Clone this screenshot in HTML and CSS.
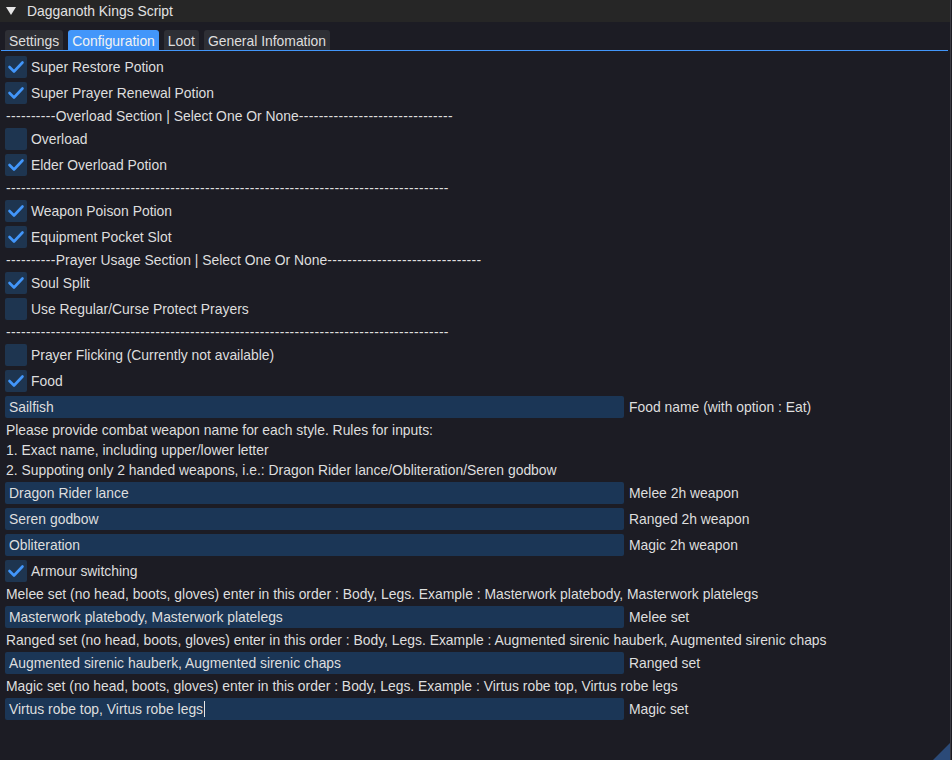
FILE: index.html
```html
<!DOCTYPE html>
<html>
<head>
<meta charset="utf-8">
<link rel="stylesheet" href="styles.css">
</head>
<body>
<div class="window">
  <div class="titlebar">
    <svg class="arrow" width="12" height="10" viewBox="0 0 12 10"><polygon points="1,1 11,1 6,9" fill="#e6e6e6"/></svg>
    <span class="title">Dagganoth Kings Script</span>
  </div>
  <div class="body">
    <div class="tabbar">
      <div class="tab">Settings</div>
      <div class="tab active">Configuration</div>
      <div class="tab">Loot</div>
      <div class="tab">General Infomation</div>
    </div>
    <div class="items">
      <div class="cbrow"><span class="cb on"><svg viewBox="0 0 22 22"><polyline points="4.5,11 9,15.5 17.5,6.5"/></svg></span><span class="lbl">Super Restore Potion</span></div>
      <div class="cbrow"><span class="cb on"><svg viewBox="0 0 22 22"><polyline points="4.5,11 9,15.5 17.5,6.5"/></svg></span><span class="lbl">Super Prayer Renewal Potion</span></div>
      <div class="text"><span class="dash">----------</span>Overload Section | Select One Or None<span class="dash">-------------------------------</span></div>
      <div class="cbrow"><span class="cb"></span><span class="lbl">Overload</span></div>
      <div class="cbrow"><span class="cb on"><svg viewBox="0 0 22 22"><polyline points="4.5,11 9,15.5 17.5,6.5"/></svg></span><span class="lbl">Elder Overload Potion</span></div>
      <div class="text"><span class="dash">-----------------------------------------------------------------------------------------</span></div>
      <div class="cbrow"><span class="cb on"><svg viewBox="0 0 22 22"><polyline points="4.5,11 9,15.5 17.5,6.5"/></svg></span><span class="lbl">Weapon Poison Potion</span></div>
      <div class="cbrow"><span class="cb on"><svg viewBox="0 0 22 22"><polyline points="4.5,11 9,15.5 17.5,6.5"/></svg></span><span class="lbl">Equipment Pocket Slot</span></div>
      <div class="text"><span class="dash">----------</span>Prayer Usage Section | Select One Or None<span class="dash">-------------------------------</span></div>
      <div class="cbrow"><span class="cb on"><svg viewBox="0 0 22 22"><polyline points="4.5,11 9,15.5 17.5,6.5"/></svg></span><span class="lbl">Soul Split</span></div>
      <div class="cbrow"><span class="cb"></span><span class="lbl">Use Regular/Curse Protect Prayers</span></div>
      <div class="text"><span class="dash">-----------------------------------------------------------------------------------------</span></div>
      <div class="cbrow"><span class="cb"></span><span class="lbl">Prayer Flicking (Currently not available)</span></div>
      <div class="cbrow"><span class="cb on"><svg viewBox="0 0 22 22"><polyline points="4.5,11 9,15.5 17.5,6.5"/></svg></span><span class="lbl">Food</span></div>
      <div class="inrow"><span class="input">Sailfish</span><span class="inlbl">Food name (with option : Eat)</span></div>
      <div class="text">Please provide combat weapon name for each style. Rules for inputs:</div>
      <div class="text">1. Exact name, including upper/lower letter</div>
      <div class="text">2. Suppoting only 2 handed weapons, i.e.: Dragon Rider lance/Obliteration/Seren godbow</div>
      <div class="inrow"><span class="input">Dragon Rider lance</span><span class="inlbl">Melee 2h weapon</span></div>
      <div class="inrow"><span class="input">Seren godbow</span><span class="inlbl">Ranged 2h weapon</span></div>
      <div class="inrow"><span class="input">Obliteration</span><span class="inlbl">Magic 2h weapon</span></div>
      <div class="cbrow"><span class="cb on"><svg viewBox="0 0 22 22"><polyline points="4.5,11 9,15.5 17.5,6.5"/></svg></span><span class="lbl">Armour switching</span></div>
      <div class="text">Melee set (no head, boots, gloves) enter in this order : Body, Legs. Example : Masterwork platebody, Masterwork platelegs</div>
      <div class="inrow"><span class="input">Masterwork platebody, Masterwork platelegs</span><span class="inlbl">Melee set</span></div>
      <div class="text">Ranged set (no head, boots, gloves) enter in this order : Body, Legs. Example : Augmented sirenic hauberk, Augmented sirenic chaps</div>
      <div class="inrow"><span class="input">Augmented sirenic hauberk, Augmented sirenic chaps</span><span class="inlbl">Ranged set</span></div>
      <div class="text">Magic set (no head, boots, gloves) enter in this order : Body, Legs. Example : Virtus robe top, Virtus robe legs</div>
      <div class="inrow"><span class="input">Virtus robe top, Virtus robe legs<span class="caret"></span></span><span class="inlbl">Magic set</span></div>
    </div>
  </div>
  <div class="grip"></div>
</div>
</body>
</html>
```
FILE: styles.css
```css
html, body {
  margin: 0;
  padding: 0;
  background: #1c1c24;
}
body {
  font-family: "Liberation Sans", Arial, sans-serif;
  font-size: 13.9px;
  color: #dedede;
}
.window {
  position: relative;
  width: 950px;
  height: 760px;
  background: #1c1c24;
  border-right: 1px solid #3c3c44;
  overflow: hidden;
}
.titlebar {
  height: 22px;
  background: #262626;
  display: flex;
  align-items: center;
  padding-left: 5px;
}
.arrow {
  display: block;
}
.title {
  margin-left: 10px;
  line-height: 22px;
  color: #e2e2e2;
}
.body {
  padding: 8px 0 0 5px;
}
.tabbar {
  display: flex;
  gap: 5px;
  margin-left: -4px;
  padding-left: 4px;
  width: 943px;
  border-bottom: 1px solid #4296fa;
  height: 20px;
}
.tab {
  height: 20px;
  line-height: 22px;
  padding: 0 4px;
  background: #2e2f35;
  border-radius: 3px 3px 0 0;
  color: #dedede;
}
.tab.active {
  background: #4296fa;
  color: #f2f2f2;
}
.items {
  display: flex;
  flex-direction: column;
  gap: 4px;
  margin-top: 5px;
}
.cbrow {
  display: flex;
  align-items: center;
  height: 22px;
}
.cb {
  width: 22px;
  height: 22px;
  background: #1e3550;
  border-radius: 2px;
  display: block;
}
.cb svg {
  display: block;
  width: 22px;
  height: 22px;
  fill: none;
  stroke: #4296fa;
  stroke-width: 2.6;
  stroke-linecap: round;
  stroke-linejoin: round;
}
.lbl {
  margin-left: 4px;
  line-height: 22px;
}
.text {
  height: 16px;
  line-height: 16px;
  white-space: nowrap;
  padding-left: 1px;
}
.dash {
  letter-spacing: 0.35px;
}
.inrow {
  display: flex;
  align-items: center;
  height: 22px;
}
.input {
  width: 615px;
  height: 22px;
  line-height: 22px;
  padding-left: 4px;
  background: #1b3656;
  border-radius: 2px;
  white-space: nowrap;
  display: flex;
  align-items: center;
}
.caret {
  display: inline-block;
  width: 1px;
  height: 16px;
  background: #e6e6e6;
  margin-left: 1px;
}
.inlbl {
  margin-left: 5px;
  line-height: 22px;
}
.grip {
  position: absolute;
  right: 0;
  bottom: 0;
  width: 0;
  height: 0;
  border-style: solid;
  border-width: 0 0 17px 17px;
  border-color: transparent transparent #2b4a78 transparent;
}
```
